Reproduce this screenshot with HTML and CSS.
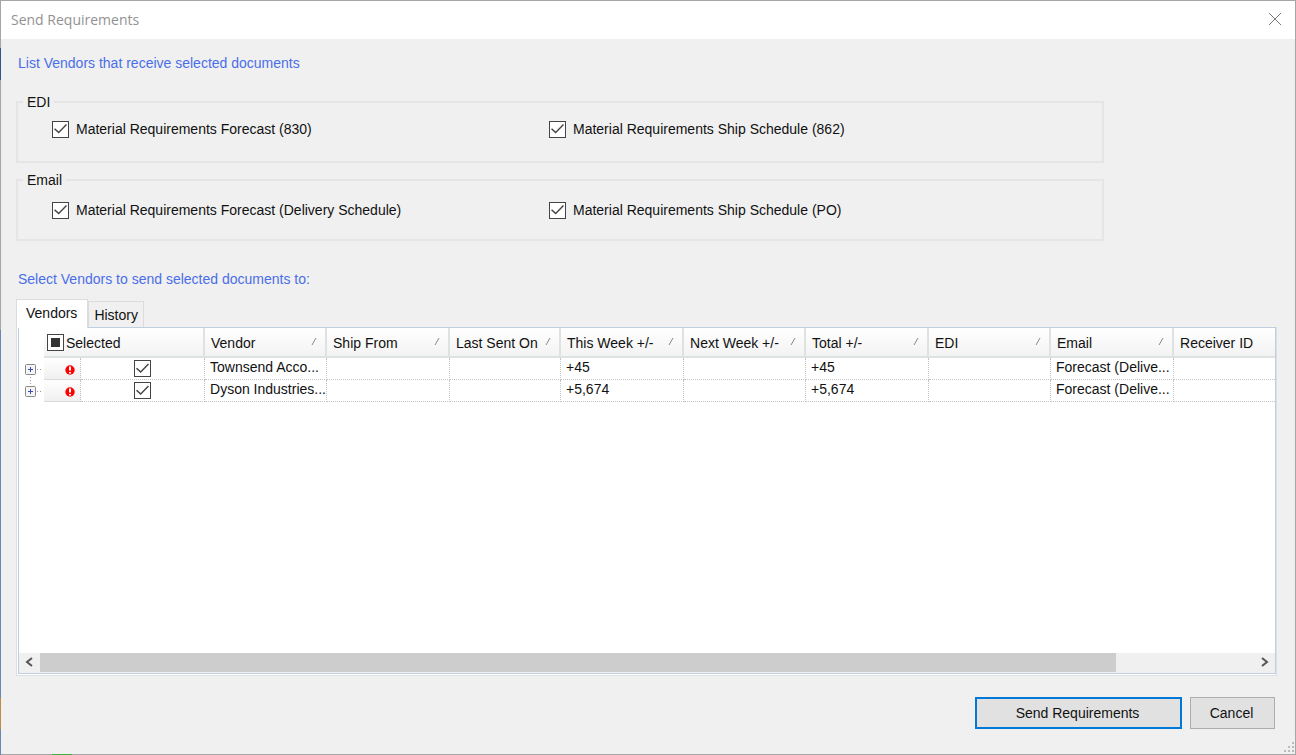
FILE: index.html
```html
<!DOCTYPE html>
<html lang="en">
<head>
<meta charset="utf-8">
<title>Send Requirements</title>
<link rel="stylesheet" href="styles.css">
</head>
<body>
<div class="window">
<main class="dialog">
  <header class="titlebar">
    <h1 class="title">Send Requirements</h1>
    <button class="close" type="button" aria-label="Close"><svg width="14" height="14" viewBox="0 0 14 14"><path d="M1 0l12 12M13 0L1 12" stroke="#777" fill="none"/></svg></button>
  </header>
  <div class="content">
    <h2 class="heading">List Vendors that receive selected documents</h2>
    <fieldset class="group">
      <legend>EDI</legend>
      <label class="option"><input class="check" type="checkbox" checked>Material Requirements Forecast (830)</label>
      <label class="option"><input class="check" type="checkbox" checked>Material Requirements Ship Schedule (862)</label>
    </fieldset>
    <fieldset class="group group-email">
      <legend>Email</legend>
      <label class="option"><input class="check" type="checkbox" checked>Material Requirements Forecast (Delivery Schedule)</label>
      <label class="option"><input class="check" type="checkbox" checked>Material Requirements Ship Schedule (PO)</label>
    </fieldset>
    <h2 class="heading heading-select">Select Vendors to send selected documents to:</h2>
    <div class="tabs" role="tablist">
      <button class="tab tab-active" type="button" role="tab" aria-selected="true">Vendors</button>
      <button class="tab" type="button" role="tab" aria-selected="false">History</button>
    </div>
    <section class="panel">
      <div class="grid-box">
        <div class="grid-scroll">
          <table class="grid">
            <colgroup><col class="c-tree"><col class="c-error"><col class="c-selected"><col class="c-std"><col class="c-wide"><col class="c-sent"><col class="c-wide"><col class="c-std"><col class="c-wide"><col class="c-std"><col class="c-wide"><col></colgroup>
            <thead>
              <tr>
                <td class="corner"></td>
                <th class="all" colspan="2"><label class="head"><input class="check mixed" type="checkbox">Selected</label></th>
                <th><div class="head">Vendor<svg class="sort" width="7" height="10" viewBox="0 0 7 10"><path d="M1 9L5 2"/></svg></div></th>
                <th><div class="head">Ship From<svg class="sort" width="7" height="10" viewBox="0 0 7 10"><path d="M1 9L5 2"/></svg></div></th>
                <th><div class="head">Last Sent On<svg class="sort" width="7" height="10" viewBox="0 0 7 10"><path d="M1 9L5 2"/></svg></div></th>
                <th><div class="head">This Week +/-<svg class="sort" width="7" height="10" viewBox="0 0 7 10"><path d="M1 9L5 2"/></svg></div></th>
                <th><div class="head">Next Week +/-<svg class="sort" width="7" height="10" viewBox="0 0 7 10"><path d="M1 9L5 2"/></svg></div></th>
                <th><div class="head">Total +/-<svg class="sort" width="7" height="10" viewBox="0 0 7 10"><path d="M1 9L5 2"/></svg></div></th>
                <th><div class="head">EDI<svg class="sort" width="7" height="10" viewBox="0 0 7 10"><path d="M1 9L5 2"/></svg></div></th>
                <th><div class="head">Email<svg class="sort" width="7" height="10" viewBox="0 0 7 10"><path d="M1 9L5 2"/></svg></div></th>
                <th><div class="head">Receiver ID</div></th>
              </tr>
            </thead>
            <tbody>
              <tr>
                <td class="tree"><button class="expand" type="button" aria-label="Expand Townsend"><svg width="20" height="22" viewBox="0 0 20 22"><path d="M6.5 16v6M13 11.500h5" stroke="#999" stroke-dasharray="1 2" fill="none"/><rect x="1.500" y="6.500" width="10" height="10" rx="1" fill="#f4f4f4" stroke="#888"/><path d="M4 11.500h5M6.500 9v5" stroke="#3a4fb0"/></svg></button></td>
                <td class="error"><svg width="10" height="10" viewBox="0 0 10 10" aria-label="Error"><circle cx="5" cy="5" r="4.700" fill="#f00"/><path d="M5 1.500v4M5 7v1.500" stroke="#fff" stroke-width="2"/></svg></td>
                <td class="pick"><input class="check" type="checkbox" checked aria-label="Select Townsend"></td>
                <td>Townsend Acco...</td><td></td><td></td><td>+45</td><td></td><td>+45</td><td></td><td>Forecast (Delive...</td><td></td>
              </tr>
              <tr>
                <td class="tree"><button class="expand" type="button" aria-label="Expand Dyson Industries"><svg width="20" height="22" viewBox="0 0 20 22"><path d="M6.500 0v6M13 11.500h5" stroke="#999" stroke-dasharray="1 2" fill="none"/><rect x="1.500" y="6.500" width="10" height="10" rx="1" fill="#f4f4f4" stroke="#888"/><path d="M4 11.500h5M6.500 9v5" stroke="#3a4fb0"/></svg></button></td>
                <td class="error"><svg width="10" height="10" viewBox="0 0 10 10" aria-label="Error"><circle cx="5" cy="5" r="4.700" fill="#f00"/><path d="M5 1.500v4M5 7v1.500" stroke="#fff" stroke-width="2"/></svg></td>
                <td class="pick"><input class="check" type="checkbox" checked aria-label="Select Dyson Industries"></td>
                <td>Dyson Industries...</td><td></td><td></td><td>+5,674</td><td></td><td>+5,674</td><td></td><td>Forecast (Delive...</td><td></td>
              </tr>
            </tbody>
          </table>
        </div>
        <div class="scrollbar">
          <button class="arrow" type="button" aria-label="Scroll left"><svg width="10" height="10" viewBox="0 0 10 10"><path d="M7 1L2 5l5 4" /></svg></button>
          <div class="track"><div class="thumb"></div></div>
          <button class="arrow" type="button" aria-label="Scroll right"><svg width="10" height="10" viewBox="0 0 10 10"><path d="M2 1l5 4-5 4" /></svg></button>
        </div>
      </div>
    </section>
    <footer class="actions">
      <button class="button button-primary" type="button">Send Requirements</button>
      <button class="button" type="button">Cancel</button>
    </footer>
  </div>
  <svg class="grip" width="11" height="11" viewBox="0 0 11 11"><path d="M8 0h2v2H8zM4 4h2v2H4zM8 4h2v2H8zM0 8h2v2H0zM4 8h2v2H4zM8 8h2v2H8z" fill="#bbb"/></svg>
</main>
</div>
</body>
</html>
```

FILE: styles.css
```css
* { box-sizing: border-box; }
body {
  margin: 0;
  font: 14px/18px "Liberation Sans", Arial, sans-serif;
  color: #111;
}
button, input { font: inherit; color: inherit; margin: 0; }
svg { display: block; }
.window {
  display: flex;
  min-height: 100vh;
  padding: 1px;
  background:
    linear-gradient(#3db03d, #3db03d) 52px 100% / 20px 1px no-repeat,
    linear-gradient(#a6a6a6 48px, #34558f 48px, #34558f 80px, #a6a6a6 80px, #a6a6a6 330px, #6c86b4 330px, #6c86b4 698px, #bf8d3e 698px, #bf8d3e 729px, #6c86b4 729px) 0 0 / 1px 100% no-repeat,
    #a6a6a6;
}
.dialog {
  position: relative;
  display: flex;
  flex: 1;
  flex-direction: column;
  min-width: 0;
  background: #f0f0f0;
}
.titlebar {
  display: flex;
  align-items: center;
  justify-content: space-between;
  height: 38px;
  padding: 0 13px 0 10px;
  background: #fff;
}
.title {
  margin: 0;
  font: 14px/20px "Open Sans", "Noto Sans", sans-serif;
  color: #929292;
}
.close { padding: 0; border: 0; background: none; }
.content {
  display: flex;
  flex: 1;
  flex-direction: column;
  padding: 15px 18px 25px 15px;
}
.heading {
  margin: 0 2px;
  font-size: 14px;
  font-weight: normal;
  color: #4a6ee8;
}
.group {
  display: grid;
  grid-template-columns: 497px 1fr;
  align-items: start;
  width: calc(100% - 173px);
  height: 70px;
  margin: 21px 0 0;
  padding: 9px 34px 0;
  border: 2px solid #e5e5e5;
}
.group legend {
  margin-left: -29px;
  padding: 0 4px;
}
.group-email { margin-top: 8px; padding-top: 12px; }
.option { display: flex; align-items: center; gap: 7px; }
.check {
  position: relative;
  flex: none;
  width: 17px;
  height: 17px;
  appearance: none;
  border: 1px solid #444;
  background: #fff;
}
.check:checked::before {
  content: "";
  position: absolute;
  inset: 1px;
  background: #444;
  clip-path: polygon(0 52%, 8% 44%, 36% 70%, 92% 12%, 100% 20%, 36% 84%);
}
.mixed::before {
  content: "";
  position: absolute;
  inset: 3px;
  background: #333;
}
.heading-select { margin-top: 29px; }
.tabs {
  display: flex;
  align-items: flex-end;
  height: 28px;
  margin-top: 11px;
}
.tab {
  height: 26px;
  padding: 0 5px;
  border: 1px solid #dcdcdc;
  border-bottom: 0;
  background: #f0f0f0;
}
.tab-active {
  z-index: 1;
  height: 29px;
  margin-bottom: -1px;
  padding: 0 10px 2px 9px;
  background: #fff;
}
.panel {
  display: flex;
  flex: 1;
  padding: 0 0 1px 1px;
  border: 1px solid #dcdfe6;
  border-top: 0;
  background: #fff;
}
.grid-box {
  display: flex;
  flex: 1;
  flex-direction: column;
  min-width: 0;
  border: 1px solid #bfcfe0;
}
.grid-scroll { flex: 1; overflow: hidden; }
.grid {
  width: 100%;
  table-layout: fixed;
  border-collapse: separate;
  border-spacing: 0;
}
.c-tree { width: 25px; }
.c-error { width: 37px; }
.c-selected { width: 124px; }
.c-std { width: 122px; }
.c-wide { width: 123px; }
.c-sent { width: 111px; }
.grid th {
  height: 30px;
  padding: 1px 0 0;
  font-weight: normal;
  text-align: left;
  background: linear-gradient(#fff, #f3f3f3);
  border-right: 2px solid #dde2e3;
  border-bottom: 2px solid #dde2e3;
}
.grid th:last-child { border-right: 0; }
.head {
  display: flex;
  align-items: center;
  justify-content: space-between;
  padding: 0 7px 0 6px;
  white-space: nowrap;
}
.sort { margin-bottom: 4px; stroke: #888; fill: none; }
label.head { justify-content: flex-start; gap: 2px; padding: 0 3px; }
.grid td {
  height: 22px;
  padding: 0 0 3px 5px;
  line-height: 18px;
  white-space: nowrap;
  overflow: hidden;
  border-right: 1px dotted #c4c4c4;
  border-bottom: 1px dotted #c4c4c4;
}
.grid td:last-child { border-right: 0; }
.grid td.corner, .grid td.tree { border: 0; padding: 0; }
.expand {
  display: block;
  padding: 0 0 0 5px;
  border: 0;
  background: none;
}
.grid td.error {
  padding: 3px 5px 0 21px;
  background: linear-gradient(#fff, #f0f0f0);
  border-bottom: 1px solid #dadada;
}
.grid td.pick { padding: 0; text-align: center; }
.pick .check { display: block; margin: 2px auto; }
.scrollbar { display: flex; height: 20px; background: #f0f0f0; }
.arrow {
  display: grid;
  place-items: center;
  width: 21px;
  padding: 0 0 2px;
  border: 0;
  background: none;
}
.arrow path { fill: none; stroke: #555; stroke-width: 2; }
.track { flex: 1; padding-bottom: 1px; }
.thumb { width: 88.600%; height: 100%; background: #cdcdcd; }
.actions {
  display: flex;
  justify-content: flex-end;
  gap: 8px;
  margin: 21px 2px 0 0;
}
.button {
  width: 85px;
  height: 32px;
  padding: 0 2px 0 0;
  border: 1px solid #adadad;
  background: #e1e1e1;
}
.button-primary { width: 207px; border: 2px solid #0078d7; }
.grip { position: absolute; right: 0; bottom: 1px; }
```
